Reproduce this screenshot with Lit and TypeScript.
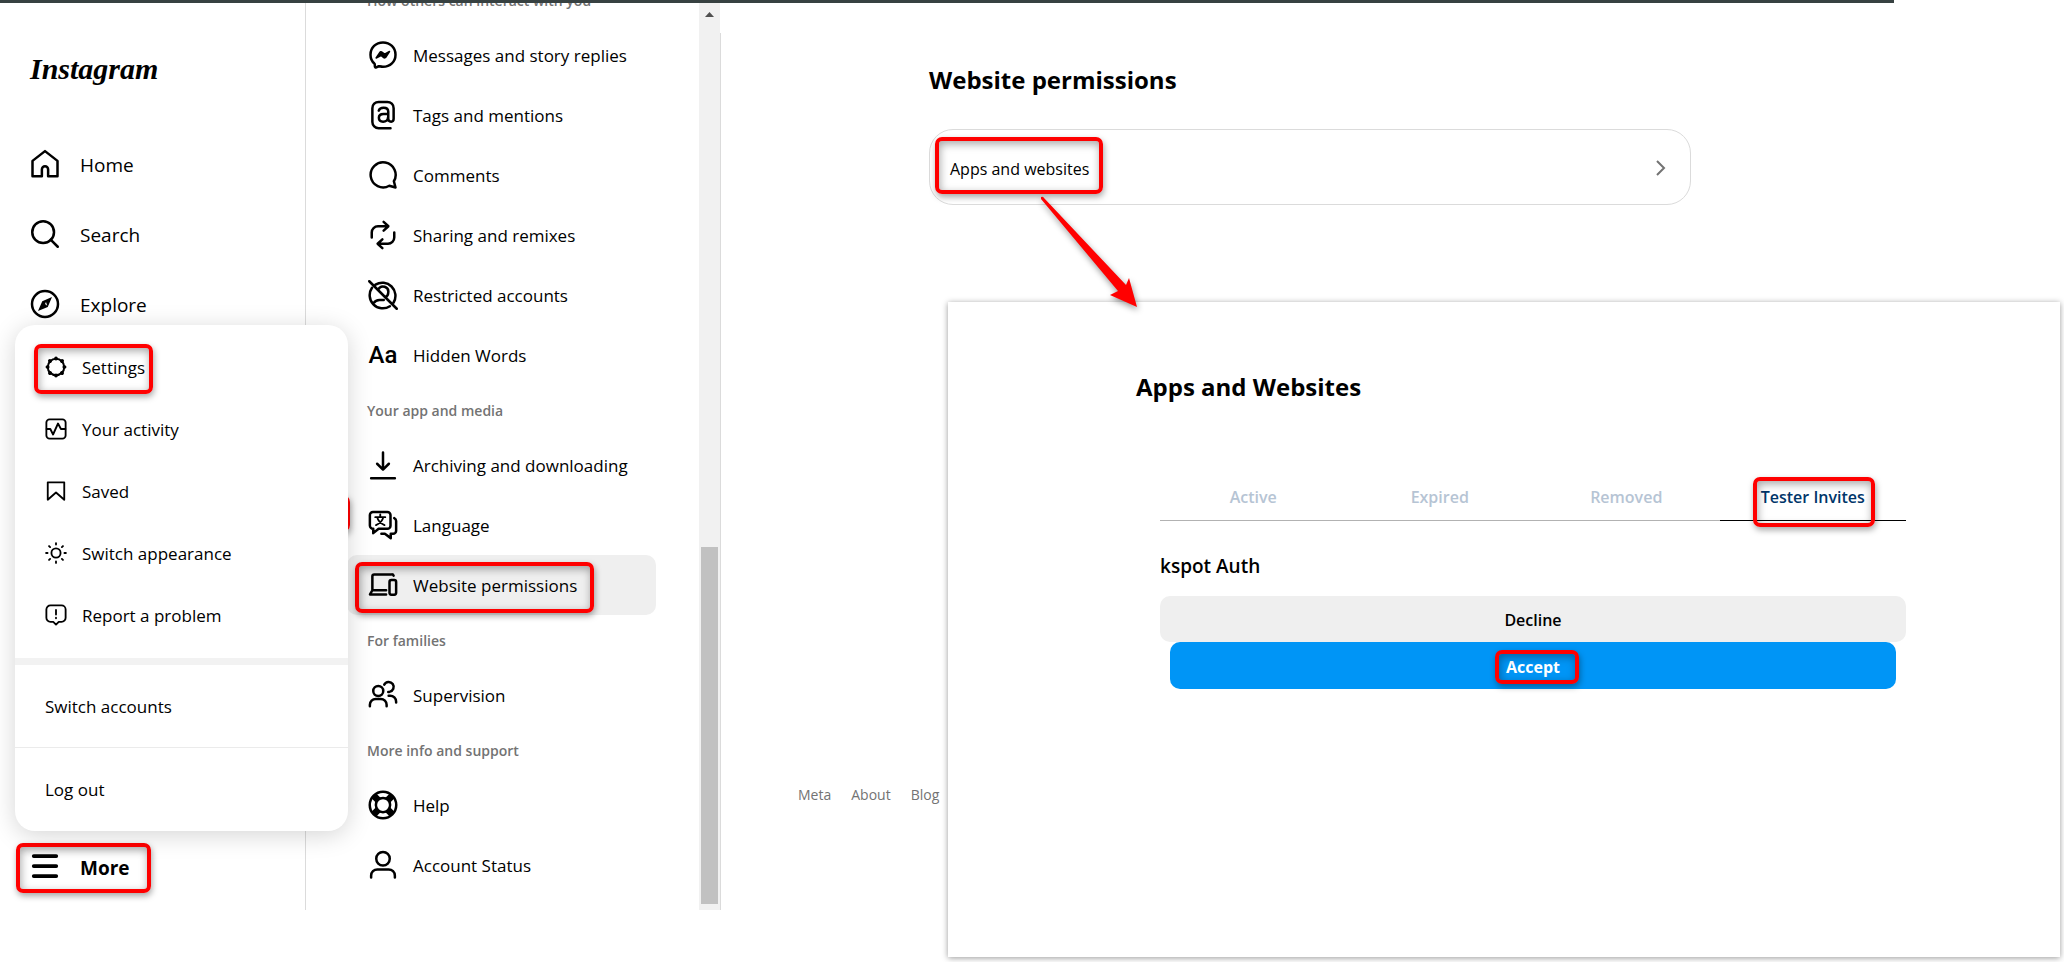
import { LitElement, html, css, svg } from "lit";
import { customElement } from "lit/decorators.js";
import { classMap } from "lit/directives/class-map.js";

const icons: Record<string, unknown> = {
  home: svg`<path d="M9.500 22v-5.400a2.500 2.500 0 0 1 5 0V22H22V9.800L12 2 2 9.800V22Z" transform="translate(0 -.3)"/>`,
  search: svg`<circle cx="10.500" cy="10.500" r="8.700"/><path d="m16.500 16.500 5.700 5.700"/>`,
  explore: svg`<circle cx="12" cy="12" r="10.400"/><path fill="currentColor" stroke="none" fill-rule="evenodd" d="M17.600 6.400 9.800 9.700 6.400 17.600l7.800-3.300ZM12.800 10.300l1 3-1.800-1.400Z"/>`,
  more: svg`<path d="M3 4h18M3 12h18M3 20h18"/>`,
  settings: svg`<circle cx="12" cy="12" r="9" stroke-width="2.200"/><path stroke-width="4" d="M12 2.600v.4M12 21v.4M2.600 12h.4M21 12h.4M5.300 5.300l.3.300M18.400 18.400l.3.300M18.700 5.300l-.3.300M5.600 18.400l-.3.300"/>`,
  activity: svg`<rect x="1.500" y="1.500" width="21" height="21" rx="3.500"/><path d="M1.800 12h4l3 6 5.400-12 3.200 6h4.800"/>`,
  saved: svg`<path d="M21 21.500 12 13.600l-9 7.900V2.500h18Z"/>`,
  sun: svg`<circle cx="12" cy="12" r="5"/><path d="M12 1.200v1.600M12 21.200v1.600M1.200 12h1.600M21.200 12h1.600M4.400 4.400l1.200 1.200M18.400 18.400l1.200 1.200M4.400 19.600l1.200-1.200M18.400 5.600l1.200-1.200"/>`,
  report: svg`<path d="M18 1.500H6A4.500 4.500 0 0 0 1.500 6v9A4.500 4.500 0 0 0 6 19.500h3l3 3 3-3h3a4.500 4.500 0 0 0 4.500-4.500V6A4.500 4.500 0 0 0 18 1.500Z"/><path d="M12 6.500v5M12 15v.600"/>`,
  messenger: svg`<path d="M12 2C6.300 2 2 6.100 2 11.700c0 2.900 1.200 5.400 3.100 7.100.200.100.300.400.300.600l.1 1.800c0 .600.600.900 1.100.700l2-.900.600 0c.900.200 1.900.400 2.800.400 5.700 0 10-4.100 10-9.700S17.700 2 12 2Z"/><path fill="currentColor" stroke-width="1.200" d="m6.500 14.400 3-4.500c.400-.600 1.100-.700 1.600-.300l2.200 1.700 3.900-2.100-3 4.600c-.400.500-1.100.700-1.600.300l-2.200-1.700Z"/>`,
  mention: svg`<path d="M18 22.500H8.500A5 5 0 0 1 3.500 17.500V6.500a5 5 0 0 1 5-5h7a5 5 0 0 1 5 5V15c0 1.500-.7 2.300-2 2.300s-2.300-.8-2.300-2.300V9.400c0-2-1.400-3.200-3.700-3.200-2 0-3.400.8-3.900 2.300M16 11.200h-3.600c-2.200 0-3.700 1-3.700 3s1.400 3.100 3.400 3.100c2.100 0 3.900-1.200 3.900-3.400"/>`,
  comment: svg`<path d="M20.700 17a10 10 0 1 0-3.700 3.600L22 22Z"/>`,
  remix: svg`<path d="M3 14v-4a5 5 0 0 1 5-5h8M12.500 1.500 16.300 5l-3.800 3.500M21 10v4a5 5 0 0 1-5 5H8M11.500 15.500 7.700 19l3.800 3.500"/>`,
  restricted: svg`<path d="M1 1l22 22M6 3.700A10.500 10.500 0 0 1 20.500 18M17.500 21A10.500 10.500 0 0 1 3.200 6.200M8.300 7.500a4.200 4.200 0 0 1 7.900 2.500c0 1.500-.7 2.800-1.900 3.500M4.500 18.500c1.200-1.800 2.600-2.500 4.600-2.500h3.500"/>`,
  download: svg`<path d="M12 2v13.500M7.300 11l4.700 4.700 4.700-4.700M2.500 22.500h19"/>`,
  language: svg`<path d="M4 1.500h11.500a2.500 2.500 0 0 1 2.500 2.500v8.500a2.500 2.500 0 0 1-2.500 2.500H8.500L4.200 18.500V15A2.500 2.500 0 0 1 1.500 12.500V4A2.500 2.500 0 0 1 4 1.500Z"/><path d="M21 6.500c1 .5 1.500 1.300 1.500 2.300v7.700a2.500 2.500 0 0 1-2.500 2.500h-1.800V22.500L13.500 19h-2.800"/><path stroke-width="1.500" d="M9.800 3.500v1.700M5.800 5.700h8M12.200 5.900c-.6 2.500-2.500 4.800-5.800 6.200M7.400 5.900c.6 2.500 2.500 4.800 5.800 6.200"/>`,
  devices: svg`<path d="M20.500 4.500A1.500 1.500 0 0 0 19 3.500H5A1.500 1.500 0 0 0 3.500 5v11M14.500 16.200H3.500L1.600 19.500h12.900"/><rect x="17.200" y="8" width="5.300" height="11.700" rx="1.500"/>`,
  people: svg`<circle cx="8.200" cy="8.800" r="4"/><path d="M1.500 21v-1.200a4.700 4.700 0 0 1 4.700-4.700h4a4.700 4.700 0 0 1 4.700 4.700V21M13 3.700a4 4 0 1 1 4.200 5.800h-1M16.500 12.500h1.200a4.800 4.800 0 0 1 4.800 4.800V18"/>`,
  help: svg`<circle cx="12" cy="12" r="10.600"/><circle cx="12" cy="12" r="5.700"/><path stroke-width="5.500" stroke-linecap="butt" d="m4.700 4.700 3.600 3.600M15.700 15.700l3.600 3.600M19.300 4.700l-3.600 3.600M8.300 15.700l-3.600 3.600"/>`,
  person: svg`<circle cx="12" cy="7" r="5.400"/><path d="M2.500 22v-1.500A5 5 0 0 1 7.500 15.500h9a5 5 0 0 1 5 5V22"/>`,
};

const icon = (name: string) =>
  name === "words"
    ? html`<span class="glyph" aria-hidden="true">Aa</span>`
    : html`<svg class="icon" viewBox="0 0 24 24" aria-hidden="true">${icons[name]}</svg>`;

const mark = (kind = "") => html`<span class="mark ${kind}" aria-hidden="true"></span>`;

const sections = [
  {
    title: "How others can interact with you",
    items: [
      ["messenger", "Messages and story replies"],
      ["mention", "Tags and mentions"],
      ["comment", "Comments"],
      ["remix", "Sharing and remixes"],
      ["restricted", "Restricted accounts"],
      ["words", "Hidden Words"],
    ],
  },
  {
    title: "Your app and media",
    items: [
      ["download", "Archiving and downloading"],
      ["language", "Language"],
      ["devices", "Website permissions"],
    ],
  },
  { title: "For families", items: [["people", "Supervision"]] },
  {
    title: "More info and support",
    items: [
      ["help", "Help"],
      ["person", "Account Status"],
    ],
  },
];

@customElement("app-root")
export class AppRoot extends LitElement {
  static styles = css`
    :host {
      display: block;
      position: relative;
      min-height: 100vh;
      overflow: hidden;
      background: #fff;
      color: #000;
      font-family: "Open Sans", "Noto Sans", sans-serif;
      font-size: 17px;
      line-height: 24px;
    }
    * { box-sizing: border-box; }
    a { color: inherit; text-decoration: none; }
    button { font: inherit; color: inherit; background: none; border: 0; padding: 0; cursor: pointer; }
    h1, h2, h3 { margin: 0; }
    .icon {
      flex: none;
      width: 30px;
      height: 30px;
      fill: none;
      stroke: currentColor;
      stroke-width: 2;
      stroke-linecap: round;
      stroke-linejoin: round;
    }
    .glyph {
      flex: none;
      width: 30px;
      text-align: center;
      font: 500 24px/30px "Roboto", sans-serif;
    }
    .label { padding-top: 2px; }
    .topbar { height: 3px; margin-right: 170px; background: #374141; }
    .layout { display: flex; height: calc(100vh - 55px); }

    .mark {
      position: absolute;
      border: 4px solid #f00;
      border-radius: 7px;
      box-shadow: 1px 3px 6px rgba(0, 0, 0, 0.35), inset 1px 3px 8px rgba(0, 0, 0, 0.35);
      pointer-events: none;
    }

    .nav {
      position: relative;
      flex: none;
      display: flex;
      flex-direction: column;
      width: 306px;
      border-right: 1px solid #dbdbdb;
    }
    .logo {
      padding: 48px 30px 54px;
      font: italic 700 30px/36px "Liberation Serif", serif;
    }
    .nav-item {
      position: relative;
      display: flex;
      align-items: center;
      gap: 20px;
      width: 100%;
      padding: 0 30px;
      height: 46px;
      margin-bottom: 24px;
      font-size: 19px;
    }
    .nav-item.current { margin: auto 0 17px; height: 50px; font-weight: 700; }
    .nav-item.current .icon { stroke-width: 3; margin-bottom: 4px; }
    .mark.more { inset: 0 154px 0 16px; }

    .menu {
      position: absolute;
      z-index: 2;
      left: 15px;
      bottom: 79px;
      width: 333px;
      border-radius: 20px;
      background: #fff;
      box-shadow: 0 4px 24px rgba(0, 0, 0, 0.17);
    }
    .menu-group { padding: 11px 0 12px; border-bottom: 7px solid #f2f2f2; }
    .menu-item {
      position: relative;
      display: flex;
      align-items: center;
      gap: 15px;
      width: 100%;
      height: 62px;
      padding: 0 30px;
    }
    .menu-item .icon { width: 22px; height: 22px; }
    .menu-item.tall { height: 83px; }
    .menu-item.ruled { border-bottom: 1px solid #ebebeb; }
    .mark.settings { inset: 8px 195px 4px 19px; }
    .mark.hidden-edge { z-index: 1; left: 200px; top: 492px; width: 150px; height: 37px; border-width: 2px; }

    .side { flex: none; display: flex; width: 415px; height: 100%; }
    .list {
      flex: 1;
      display: flex;
      flex-direction: column;
      justify-content: flex-end;
      overflow: hidden;
      padding: 0 43px 15px 41px;
    }
    .section-title {
      flex: none;
      display: flex;
      align-items: center;
      height: 50px;
      padding: 2px 0 0 20px;
      font-size: 14px;
      font-weight: 600;
      color: #737373;
    }
    .list-item {
      position: relative;
      flex: none;
      display: flex;
      align-items: center;
      gap: 15px;
      height: 60px;
      padding-left: 21px;
      border-radius: 10px;
    }
    .list-item.active { background: #efefef; }
    .mark.site { inset: 7px 62px 2px 8px; }
    .scrollbar {
      flex: none;
      display: flex;
      flex-direction: column;
      justify-content: space-between;
      width: 21px;
      padding: 9px 2px 6px;
      background: #f1f1f1;
    }
    .arrow-up { width: 9px; height: 5px; margin-left: 4px; background: #505050; clip-path: polygon(50% 0, 100% 100%, 0 100%); }
    .thumb { height: 40%; background: #c1c1c1; }
    .divider { flex: none; width: 1px; margin-top: 30px; background: #dbdbdb; }

    .main {
      flex: 1;
      display: flex;
      flex-direction: column;
      padding: 61px 373px 0 208px;
    }
    .title { font-size: 24px; line-height: 32px; font-weight: 700; }
    .card {
      position: relative;
      display: flex;
      align-items: center;
      justify-content: space-between;
      height: 76px;
      margin-top: 33px;
      padding: 2px 24px 0 20px;
      border: 1px solid #dbdbdb;
      border-radius: 24px;
      font-size: 16px;
    }
    .chevron { width: 10px; height: 16px; fill: none; stroke: #737373; stroke-width: 2; }
    .mark.apps { left: 5px; top: 7px; width: 168px; height: 57px; }
    .pointer {
      position: absolute;
      z-index: 4;
      left: 106px;
      top: 62px;
      width: 110px;
      height: 124px;
      fill: #f00;
      filter: drop-shadow(1px 3px 3px rgba(0, 0, 0, 0.4));
      pointer-events: none;
    }
    .footer {
      display: flex;
      gap: 20px;
      margin: auto 0 103px -131px;
      font-size: 14px;
      color: #737373;
    }

    .dialog {
      position: absolute;
      z-index: 3;
      left: 948px;
      right: 4px;
      top: 302px;
      padding: 69px 154px 268px 188px;
      background: #fff;
      box-shadow: 0 1px 6px rgba(0, 0, 0, 0.4);
    }
    .dialog-body { margin: 78px 0 0 24px; }
    .tabs { display: grid; grid-template-columns: repeat(4, 1fr); }
    .tab {
      position: relative;
      height: 40px;
      padding-bottom: 8px;
      border-bottom: 1px solid #b2b2b2;
      color: #b6c4d4;
      font-size: 16px;
      font-weight: 600;
    }
    .tab.selected { color: #003569; border-color: #000; }
    .mark.invites { inset: -4px 31px -7px 33px; }
    .app-name { margin: 33px 0 18px; font-size: 19px; font-weight: 600; }
    .action {
      display: block;
      position: relative;
      width: 100%;
      height: 46px;
      padding-top: 2px;
      border-radius: 10px;
      background: #efefef;
      font-size: 16px;
      font-weight: 600;
    }
    .action.primary {
      width: calc(100% - 20px);
      height: 47px;
      margin: 0 10px;
      background: #0095f6;
      color: #fff;
      font-weight: 700;
    }
    .accept-label { position: relative; }
    .mark.accept { inset: -6px -19px -6px -11px; }
  `;

  private menuItem(name: string, label: string) {
    return html`<button class="menu-item">
      ${icon(name)}<span class="label">${label}</span>${name === "settings" ? mark("settings") : ""}
    </button>`;
  }

  private listItem(name: string, label: string) {
    const active = name === "devices";
    return html`<a href="#" class=${classMap({ "list-item": true, active })}>
      ${icon(name)}<span class="label">${label}</span>${active ? mark("site") : ""}
    </a>`;
  }

  render() {
    return html`
      <div class="topbar"></div>
      <div class="layout">
        <nav class="nav">
          <a href="#" class="logo">Instagram</a>
          <a href="#" class="nav-item">${icon("home")}<span class="label">Home</span></a>
          <a href="#" class="nav-item">${icon("search")}<span class="label">Search</span></a>
          <a href="#" class="nav-item">${icon("explore")}<span class="label">Explore</span></a>
          <button class="nav-item current">${icon("more")}<span>More</span>${mark("more")}</button>
          ${mark("hidden-edge")}
          <div class="menu">
            <div class="menu-group">
              ${this.menuItem("settings", "Settings")}
              ${this.menuItem("activity", "Your activity")}
              ${this.menuItem("saved", "Saved")}
              ${this.menuItem("sun", "Switch appearance")}
              ${this.menuItem("report", "Report a problem")}
            </div>
            <button class="menu-item tall ruled"><span class="label">Switch accounts</span></button>
            <button class="menu-item tall">Log out</button>
          </div>
        </nav>

        <aside class="side">
          <div class="list">
            ${sections.map(
              (s) => html`<h3 class="section-title">${s.title}</h3>
                ${s.items.map(([name, label]) => this.listItem(name, label))}`
            )}
          </div>
          <div class="scrollbar" aria-hidden="true">
            <span class="arrow-up"></span>
            <span class="thumb"></span>
          </div>
          <div class="divider"></div>
        </aside>

        <main class="main">
          <h1 class="title">Website permissions</h1>
          <a href="#" class="card">
            <span class="label">Apps and websites</span>
            <svg class="chevron" viewBox="0 0 10 16" aria-hidden="true"><path d="m1 1 7 7-7 7" /></svg>
            ${mark("apps")}
            <svg class="pointer" viewBox="0 0 110 124" aria-hidden="true">
              <path d="M5 5q2-1 3 1L90 93l3-7 8 29-27-12 8-4L5 7Z" />
            </svg>
          </a>
          <footer class="footer">
            <a href="#">Meta</a><a href="#">About</a><a href="#">Blog</a>
          </footer>
        </main>
      </div>

      <section class="dialog">
        <h2 class="title">Apps and Websites</h2>
        <div class="dialog-body">
          <div class="tabs" role="tablist">
            <button class="tab" role="tab">Active</button>
            <button class="tab" role="tab">Expired</button>
            <button class="tab" role="tab">Removed</button>
            <button class="tab selected" role="tab" aria-selected="true">Tester Invites${mark("invites")}</button>
          </div>
          <h3 class="app-name">kspot Auth</h3>
          <button class="action">Decline</button>
          <button class="action primary"><span class="accept-label">Accept${mark("accept")}</span></button>
        </div>
      </section>
    `;
  }
}
